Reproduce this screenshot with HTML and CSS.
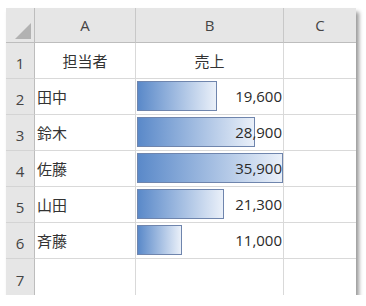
FILE: index.html
```html
<!DOCTYPE html>
<html lang="ja">
<head>
  <meta charset="UTF-8" />
  <title>売上</title>
  <link rel="stylesheet" href="styles.css">
</head>
<body>
  <div class="sheet">
    <div class="corner"><span class="corner-mark"></span></div>
    <div class="col-head">A</div>
    <div class="col-head">B</div>
    <div class="col-head">C</div>

    <div class="row-head">1</div>
    <div class="cell center">担当者</div>
    <div class="cell center">売上</div>
    <div class="cell"></div>

    <div class="row-head">2</div>
    <div class="cell">田中</div>
    <div class="cell bar-cell"><span class="bar" style="width: 54.6%"></span><span class="num">19,600</span></div>
    <div class="cell"></div>

    <div class="row-head">3</div>
    <div class="cell">鈴木</div>
    <div class="cell bar-cell"><span class="bar" style="width: 80.5%"></span><span class="num">28,900</span></div>
    <div class="cell"></div>

    <div class="row-head">4</div>
    <div class="cell">佐藤</div>
    <div class="cell bar-cell"><span class="bar" style="width: 100%"></span><span class="num">35,900</span></div>
    <div class="cell"></div>

    <div class="row-head">5</div>
    <div class="cell">山田</div>
    <div class="cell bar-cell"><span class="bar" style="width: 59.3%"></span><span class="num">21,300</span></div>
    <div class="cell"></div>

    <div class="row-head">6</div>
    <div class="cell">斉藤</div>
    <div class="cell bar-cell"><span class="bar" style="width: 30.6%"></span><span class="num">11,000</span></div>
    <div class="cell"></div>

    <div class="row-head">7</div>
    <div class="cell"></div>
    <div class="cell"></div>
    <div class="cell"></div>
  </div>
</body>
</html>
```

FILE: styles.css
```css
body {
  margin: 0;
  background: #fff;
  font-family: "Noto Sans CJK JP", "Noto Sans", sans-serif;
}

.sheet {
  display: grid;
  grid-template-columns: 29px 101px 148px 72px;
  grid-template-rows: 35px repeat(7, 36px);
  width: 350px;
  margin: 8px 0 0 6px;
  background: #fff;
  box-shadow: 3px 4px 4px rgba(0, 0, 0, 0.4);
}

.corner,
.col-head,
.row-head {
  background: #e6e6e6;
  color: #444;
  font-family: "Open Sans", "Liberation Sans", sans-serif;
  font-size: 15px;
}

.corner {
  display: flex;
  align-items: flex-end;
  justify-content: flex-end;
  padding: 0 3px 3px 0;
  border-right: 1px solid #bdbdbd;
  border-bottom: 1px solid #bdbdbd;
}

.corner-mark {
  width: 0;
  height: 0;
  border-left: 16px solid transparent;
  border-bottom: 16px solid #b2b2b2;
}

.col-head {
  display: flex;
  align-items: center;
  justify-content: center;
  border-right: 1px solid #c8c8c8;
  border-bottom: 1px solid #bdbdbd;
}

.col-head:nth-child(4) {
  border-right: none;
}

.row-head {
  display: flex;
  align-items: flex-end;
  justify-content: center;
  padding-bottom: 5px;
  border-right: 1px solid #bdbdbd;
  border-bottom: 1px solid #d4d4d4;
}

.row-head:nth-last-child(4) {
  border-bottom: none;
}

.cell {
  display: flex;
  align-items: center;
  padding: 0 2px;
  font-size: 15px;
  color: #333;
  border-right: 1px solid #d9d9d9;
  border-bottom: 1px solid #d9d9d9;
}

.cell:nth-child(4n) {
  border-right: none;
}

.sheet .cell:nth-last-child(-n+3) {
  border-bottom: none;
}

.center {
  justify-content: center;
}

.bar-cell {
  display: grid;
  align-items: stretch;
  padding: 2px 0 3px 1px;
}

.bar,
.num {
  grid-area: 1 / 1;
}

.bar {
  box-sizing: border-box;
  border: 1px solid #6f85ad;
  background: linear-gradient(to right, #5a89c9, #eaf0f9);
}

.num {
  align-self: center;
  justify-self: end;
  padding-right: 1px;
  font-family: "Open Sans", "Liberation Sans", sans-serif;
  color: #2a2a2a;
  position: relative;
}
```
